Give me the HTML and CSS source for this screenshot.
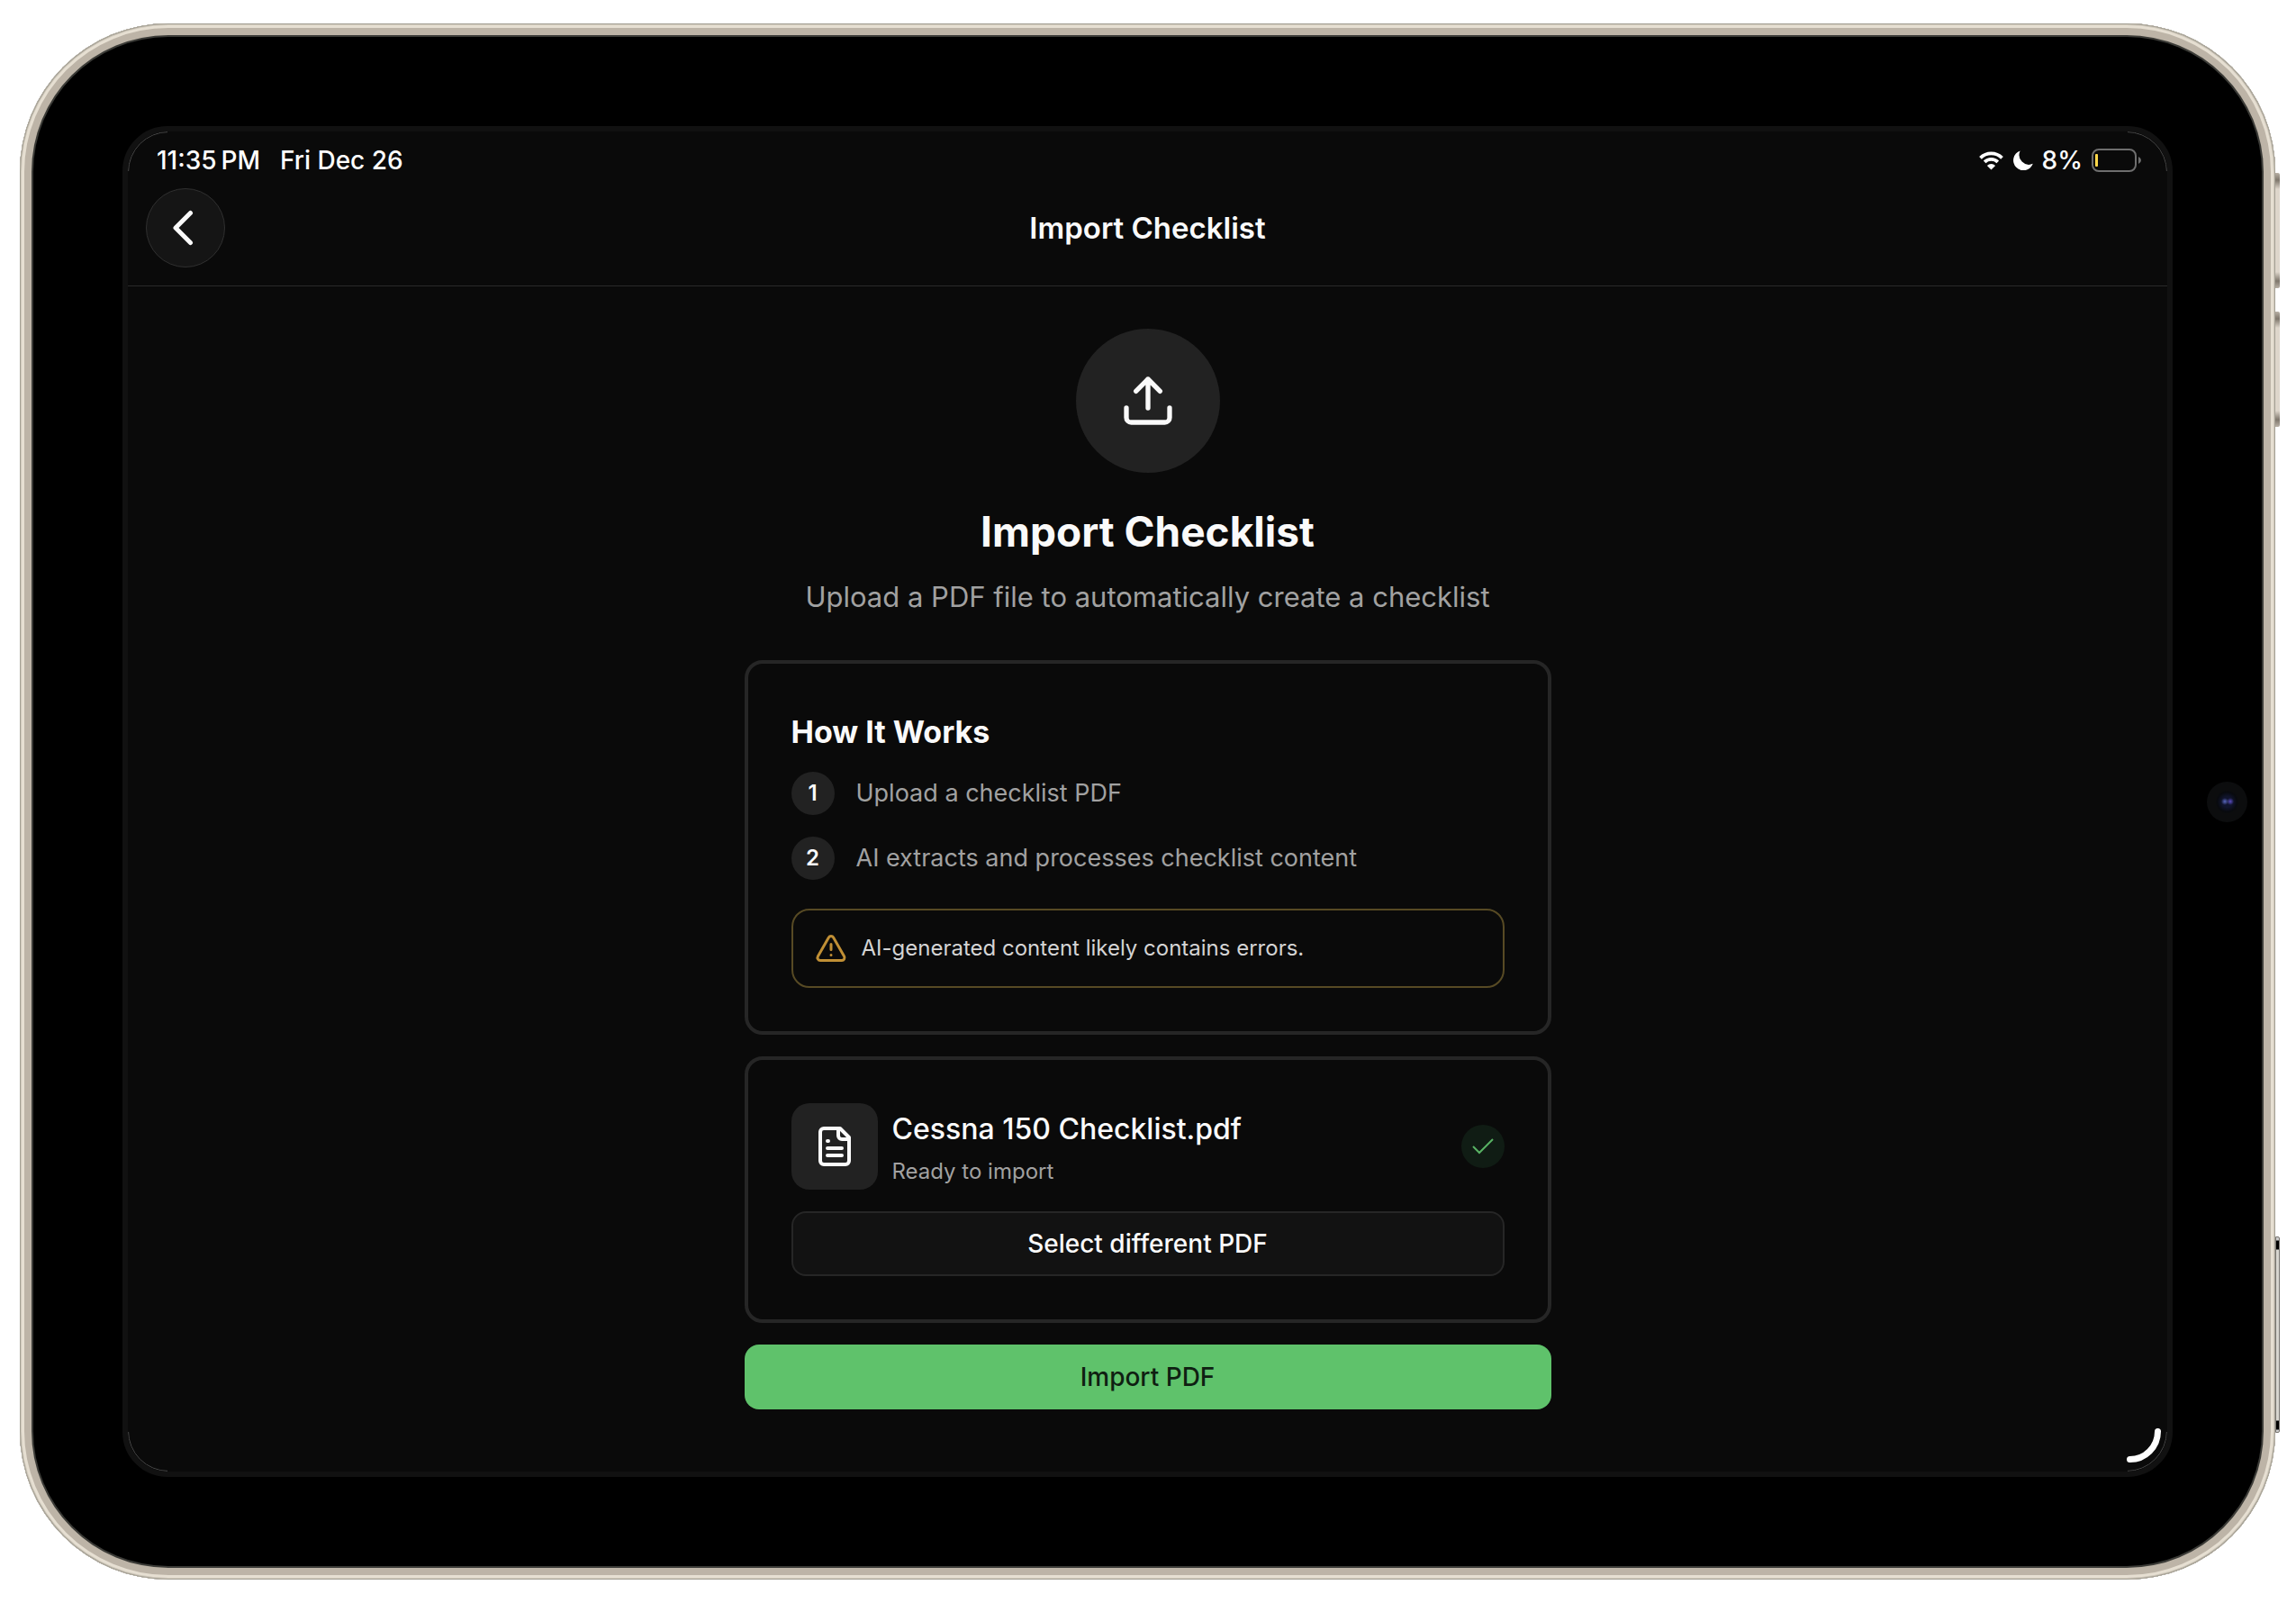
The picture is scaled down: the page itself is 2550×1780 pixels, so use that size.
FILE: index.html
```
<!DOCTYPE html>
<html lang="en">
<head>
    <meta charset="UTF-8">
    <meta name="viewport" content="width=device-width, initial-scale=1.0">
    <title>Import Checklist</title>
    <link rel="stylesheet" href="styles.css">
</head>
<body>

    <!-- Tablet frame -->
    <div class="device">
        <span class="side-button volume-up"></span>
        <span class="side-button volume-down"></span>
        <span class="side-button pencil"></span>
        <span class="camera"></span>

        <div class="screen">

            <!-- Status Bar -->
            <div class="status-bar">
                <div class="status-left">
                    <span>11:35&#8201;PM</span>
                    <span>Fri Dec 26</span>
                </div>
                <div class="status-right">
                    <svg class="wifi" viewBox="0 0 28 22" aria-hidden="true">
                        <path d="M2 8.3a17 17 0 0 1 24 0M6.7 12.9a10.4 10.4 0 0 1 14.6 0" fill="none" stroke="#fff" stroke-width="3.8"/>
                        <path d="M14 21.5l-4.6-4.6a6.6 6.6 0 0 1 9.2 0z" fill="#fff"/>
                    </svg>
                    <svg class="moon" viewBox="0 0 22 22" aria-hidden="true">
                        <path d="M7.6.4A11.2 11.2 0 1 0 21.8 14.8 10.8 10.8 0 0 1 7.6.4z" fill="#fff"/>
                    </svg>
                    <span>8%</span>
                    <svg class="battery" viewBox="0 0 56 26" aria-hidden="true">
                        <rect x="1" y="1" width="48" height="24" rx="7" fill="none" stroke="#6e6e6e" stroke-width="2"/>
                        <rect x="4" y="6" width="3" height="14" rx="1" fill="#ffd84a"/>
                        <path d="M52 9q3 1.500 3 4t-3 4z" fill="#6e6e6e"/>
                    </svg>
                </div>
            </div>

            <!-- Header -->
            <header class="header">
                <button class="back-button" type="button" aria-label="Back">
                    <svg viewBox="0 0 24 40" aria-hidden="true">
                        <path d="M20.500 3.500L4 20l16.500 16.500"/>
                    </svg>
                </button>
                <div class="header-title">Import Checklist</div>
            </header>

            <!-- Main Content -->
            <main class="content">
                <div class="hero-icon">
                    <svg viewBox="0 0 24 24" aria-hidden="true">
                        <path d="M12 3v12M7 8l5-5 5 5M21 15v4a2 2 0 0 1-2 2H5a2 2 0 0 1-2-2v-4"/>
                    </svg>
                </div>
                <h1>Import Checklist</h1>
                <p class="subtitle">Upload a PDF file to automatically create a checklist</p>

                <section class="card">
                    <h2>How It Works</h2>
                    <ol class="steps">
                        <li><span class="step-number">1</span>Upload a checklist PDF</li>
                        <li><span class="step-number">2</span>AI extracts and processes checklist content</li>
                    </ol>
                    <div class="warning">
                        <svg viewBox="0 0 24 24" aria-hidden="true">
                            <path d="M21.730 18l-8-14a2 2 0 0 0-3.480 0l-8 14A2 2 0 0 0 4 21h16a2 2 0 0 0 1.730-3z"/>
                            <path class="mark" d="M12 9v4M12 17h.01"/>
                        </svg>
                        <span>AI-generated content likely contains errors.</span>
                    </div>
                </section>

                <section class="card">
                    <div class="file-row">
                        <div class="file-icon">
                            <svg viewBox="0 0 24 24" aria-hidden="true">
                                <path d="M15 2H6a2 2 0 0 0-2 2v16a2 2 0 0 0 2 2h12a2 2 0 0 0 2-2V7zM14 2v4a2 2 0 0 0 2 2h4M8 9h.5M16 13H8M16 17H8"/>
                            </svg>
                        </div>
                        <div class="file-info">
                            <div class="file-name">Cessna 150 Checklist.pdf</div>
                            <div class="file-status">Ready to import</div>
                        </div>
                        <div class="file-check">
                            <svg viewBox="0 0 24 24" aria-hidden="true">
                                <path d="M1 12l7 7L23 4"/>
                            </svg>
                        </div>
                    </div>
                    <button class="select-button" type="button">Select different PDF</button>
                </section>

                <button class="import-button" type="button">Import PDF</button>
            </main>

            <svg class="corner-handle" viewBox="0 0 40 40" aria-hidden="true">
                <path d="M35.500 4.500A31 31 0 0 1 4.500 35.500"/>
            </svg>
        </div>
    </div>

</body>
</html>
```
FILE: styles.css
```
* {
    box-sizing: border-box;
    margin: 0;
    padding: 0;
}
body {
    display: flex;
    min-height: 100vh;
    padding: 26px 23px 26px 22px;
    background-color: #fff;
    font-family: Inter, 'Liberation Sans', sans-serif;
    color: #fafafa;
}
button {
    font-family: inherit;
    cursor: pointer;
}
svg {
    display: block;
    flex-shrink: 0;
}

/* Tablet */
.device {
    position: relative;
    display: flex;
    flex: 1;
    padding: 114px;
    border-radius: 165px;
    background-color: #000;
    box-shadow:
        inset 0 0 0 1px #a5a195,
        inset 0 0 0 2px #d0c9bc,
        inset 0 0 0 5px #e6dfd2,
        inset 0 0 0 13px #bdb4a7,
        inset 0 0 0 15px #3b3b37;
}
.side-button {
    position: absolute;
    left: 100%;
    width: 5px;
    height: 128px;
    border-radius: 0 2px 2px 0;
    background: linear-gradient(#b9b1a6, #7f776c 8px, #ded6cb 18px, #ded6cb 110px, #7f776c 120px, #b9b1a6);
}
.volume-up {
    top: 166px;
}
.volume-down {
    top: 320px;
}
.pencil {
    bottom: 163px;
    height: 218px;
    border: 1px solid #77746f;
    background: linear-gradient(#ccc 3px, #000 4px, #000 13px, #d8d6d0 14px, #d8d6d0 203px, #000 204px, #000 213px, #ccc 214px);
}
.camera {
    position: absolute;
    top: calc(50% - 22px);
    right: 31px;
    width: 45px;
    height: 45px;
    border-radius: 50%;
    background:
        radial-gradient(circle at 20px 22px, #5a68c0 0, transparent 4px),
        radial-gradient(circle at 26px 22px, #5a4cc0 0, transparent 4px),
        radial-gradient(circle, #10142c 6px, #080a0e 11px, #0c0d0e 13px);
}
.screen {
    position: relative;
    display: flex;
    flex: 1;
    flex-direction: column;
    border: 6px solid #111;
    border-radius: 50px;
    background-color: #0a0a0a;
}
/* thin highlight that shows only in the rounded corners */
.screen::after {
    content: "";
    position: absolute;
    inset: 0;
    border: 1px solid #4a4a4a;
    border-radius: 45px;
    pointer-events: none;
    mask:
        linear-gradient(#000, #000) left top / 44px 44px no-repeat,
        linear-gradient(#000, #000) right top / 44px 44px no-repeat,
        linear-gradient(#000, #000) left bottom / 44px 44px no-repeat,
        linear-gradient(#000, #000) right bottom / 44px 44px no-repeat;
}

/* Status bar */
.status-bar {
    display: flex;
    justify-content: space-between;
    padding: 13px 28px 0 32px;
    font-size: 28px;
    font-weight: 500;
    line-height: 38px;
    color: #fff;
}
.status-left {
    display: flex;
    gap: 22px;
}
.status-right {
    display: flex;
    align-items: center;
    gap: 10px;
}
.wifi {
    width: 29px;
    height: 22px;
}
.moon {
    width: 22px;
    height: 22px;
}
.battery {
    width: 56px;
    height: 26px;
}

/* Header */
.header {
    display: grid;
    grid-template-columns: 88px 1fr 88px;
    align-items: center;
    padding: 12px 20px 20px;
    border-bottom: 1px solid #2a2a2a;
}
.back-button {
    display: flex;
    align-items: center;
    justify-content: center;
    width: 88px;
    height: 88px;
    padding-right: 6px;
    border: 1px solid #303030;
    border-radius: 50%;
    background-color: #151515;
}
.back-button svg {
    width: 24px;
    height: 40px;
    fill: none;
    stroke: #fafafa;
    stroke-width: 5;
    stroke-linecap: round;
    stroke-linejoin: round;
}
.header-title {
    font-size: 33px;
    font-weight: 600;
    line-height: 44px;
    text-align: center;
}

/* Content */
.content {
    display: flex;
    flex-direction: column;
    width: 100%;
    max-width: 896px;
    margin: 0 auto;
    padding: 47px 0;
}
.hero-icon {
    display: flex;
    align-items: center;
    justify-content: center;
    align-self: center;
    width: 160px;
    height: 160px;
    margin-bottom: 32px;
    border-radius: 50%;
    background-color: #222;
}
.hero-icon svg {
    width: 64px;
    height: 64px;
}
.hero-icon svg,
.file-icon svg {
    fill: none;
    stroke: #fafafa;
    stroke-width: 2;
    stroke-linecap: round;
    stroke-linejoin: round;
}
h1 {
    margin-bottom: 16px;
    font-size: 46px;
    font-weight: 700;
    line-height: 66px;
    text-align: center;
}
.subtitle {
    margin-bottom: 46px;
    font-size: 31px;
    line-height: 48px;
    text-align: center;
    color: #a1a1a1;
}
.card {
    margin-bottom: 24px;
    padding: 48px;
    border: 4px solid #262626;
    border-radius: 20px;
}
h2 {
    margin-bottom: 16px;
    font-size: 34px;
    font-weight: 700;
    line-height: 56px;
}
.steps {
    display: flex;
    flex-direction: column;
    gap: 24px;
    margin-bottom: 32px;
    list-style: none;
}
.steps li {
    display: flex;
    align-items: center;
    gap: 24px;
    font-size: 27px;
    line-height: 40px;
    color: #a1a1a1;
}
.step-number {
    display: flex;
    align-items: center;
    justify-content: center;
    width: 48px;
    height: 48px;
    border-radius: 50%;
    background-color: #222;
    font-size: 24px;
    font-weight: 600;
    color: #fafafa;
}
.warning {
    display: flex;
    align-items: center;
    gap: 16px;
    padding: 24px;
    border: 2px solid #574a24;
    border-radius: 20px;
    font-size: 24px;
    line-height: 36px;
    color: #d4d4d4;
}
.warning svg {
    width: 36px;
    height: 36px;
    fill: none;
    stroke: #c08f35;
    stroke-width: 2;
    stroke-linecap: round;
    stroke-linejoin: round;
}
.file-row {
    display: flex;
    align-items: center;
    gap: 16px;
    margin-bottom: 24px;
}
.file-icon {
    display: flex;
    align-items: center;
    justify-content: center;
    width: 96px;
    height: 96px;
    border-radius: 20px;
    background-color: #222;
}
.file-icon svg {
    width: 48px;
    height: 48px;
}
.file-info {
    flex: 1;
}
.file-name {
    margin-bottom: 2px;
    font-size: 32px;
    font-weight: 500;
    line-height: 54px;
}
.file-status {
    font-size: 24px;
    line-height: 36px;
    color: #a1a1a1;
}
.file-check {
    display: flex;
    align-items: center;
    justify-content: center;
    width: 48px;
    height: 48px;
    border-radius: 50%;
    background-color: #101c14;
}
.file-check svg {
    width: 24px;
    height: 24px;
    fill: none;
    stroke: #58b264;
    stroke-width: 2;
}
.select-button,
.import-button {
    width: 100%;
    height: 72px;
    border-radius: 16px;
    font-size: 28px;
    font-weight: 500;
}
.select-button {
    border: 2px solid #262626;
    background-color: #121212;
    color: #fafafa;
}
.import-button {
    border: none;
    background-color: #5fc26b;
    color: #0f1f12;
}

.corner-handle {
    position: absolute;
    right: 6px;
    bottom: 9px;
    width: 40px;
    height: 40px;
    fill: none;
    stroke: #fff;
    stroke-width: 7;
    stroke-linecap: round;
}
```
